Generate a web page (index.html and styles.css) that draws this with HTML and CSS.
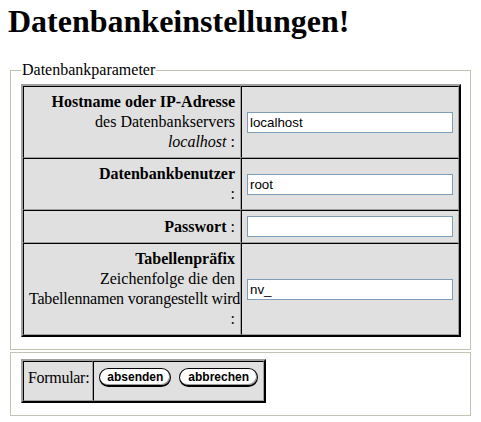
FILE: index.html
```html
<!DOCTYPE html>
<html lang="de">
<head>
<meta charset="utf-8">
<title>Datenbankeinstellungen</title>
<link rel="stylesheet" href="styles.css">
</head>
<body>
<h1 class="title">Datenbankeinstellungen!</h1>
<form class="setup">
  <fieldset class="group group--legend">
    <legend class="group-legend">Datenbankparameter</legend>
    <table class="grid grid--full">
      <tr>
        <td class="cell cell--label"><b>Hostname oder IP-Adresse</b><br>des Datenbankservers<br><i>localhost</i> :</td>
        <td class="cell cell--field"><input class="field" type="text" value="localhost"></td>
      </tr>
      <tr>
        <td class="cell cell--label"><b>Datenbankbenutzer</b><br>:</td>
        <td class="cell cell--field"><input class="field" type="text" value="root"></td>
      </tr>
      <tr>
        <td class="cell cell--label"><b>Passwort</b> :</td>
        <td class="cell cell--field"><input class="field" type="password" value=""></td>
      </tr>
      <tr>
        <td class="cell cell--label"><b>Tabellenpräfix</b><br>Zeichenfolge die den<br><span class="nowrap">Tabellennamen vorangestellt wird</span><br>:</td>
        <td class="cell cell--field"><input class="field" type="text" value="nv_"></td>
      </tr>
    </table>
  </fieldset>
  <fieldset class="group">
    <table class="grid">
      <tr>
        <td class="cell cell--caption">Formular:</td>
        <td class="cell cell--buttons">
          <div class="actions">
            <button class="btn" type="button">absenden</button>
            <button class="btn" type="button">abbrechen</button>
          </div>
        </td>
      </tr>
    </table>
  </fieldset>
</form>
</body>
</html>
```
FILE: styles.css
```css
html {
  background: #fff;
}

body {
  margin: 0 8px;
  font-family: "Liberation Serif", "Times New Roman", serif;
  font-size: 16px;
  color: #000;
}

.title {
  margin: 3px 0 21px;
  font-family: "Liberation Serif", "Times New Roman", serif;
  font-size: 32px;
  font-weight: bold;
  line-height: normal;
}

.setup {
  margin: 0;
}

.group {
  margin: 2px;
  padding: 6px 9px 12px 10px;
  border: 1px solid #c3c3b4;
  min-width: 0;
}

.group--legend {
  padding-top: 5px;
}

.group-legend {
  padding: 0 1px;
  font-size: 16px;
  line-height: normal;
}

.grid {
  border-collapse: separate;
  border-spacing: 0;
  border: 2px solid;
  border-color: #a0a0a0 #000 #000 #a0a0a0;
  background: #e0e0e0;
}

.grid--full {
  width: 100%;
  table-layout: fixed;
}

.cell {
  border: 1px solid;
  border-color: #000 #a0a0a0 #a0a0a0 #000;
  padding: 5px;
  line-height: 20px;
  vertical-align: middle;
}

.cell--label {
  width: 50%;
  text-align: right;
}

.nowrap {
  white-space: nowrap;
  letter-spacing: -0.2px;
}

.cell--field {
  width: 50%;
}

.field {
  display: block;
  width: 100%;
  height: 21px;
  box-sizing: border-box;
  margin: 0;
  padding: 0 2px;
  border: 1px solid #7f9db9;
  background: #fff;
  font-family: "Liberation Sans", Arial, sans-serif;
  font-size: 13.33px;
  color: #000;
  outline: none;
}

.cell--caption {
  padding: 3px 3px 9px 4px;
  white-space: nowrap;
  letter-spacing: -0.3px;
}

.actions {
  display: flex;
  gap: 8px;
  align-items: flex-start;
  padding: 1px 0 8px;
}

.btn {
  height: 19px;
  margin: 0;
  padding: 0 7px;
  border: 1px solid #000;
  border-bottom-width: 2px;
  border-radius: 10px;
  background: #fff;
  box-shadow: inset -1px -1px 0 #9a9a9a, inset 1px 1px 0 #fff;
  font-family: "Liberation Sans", Arial, sans-serif;
  font-size: 12px;
  font-weight: bold;
  line-height: 15px;
  color: #000;
}

.btn + .btn {
  padding: 0 8px;
}
```
